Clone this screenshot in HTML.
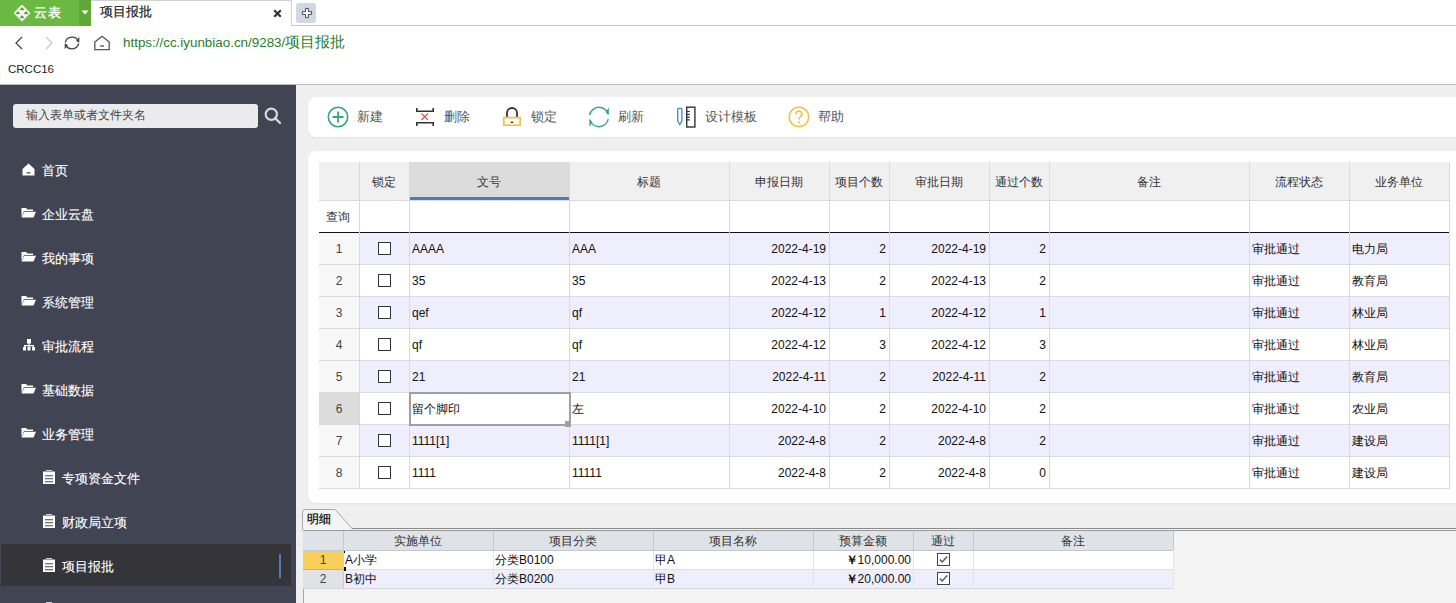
<!DOCTYPE html><html><head><meta charset="utf-8"><style>
*{box-sizing:border-box;margin:0;padding:0}
html,body{width:1456px;height:603px;overflow:hidden;background:#fff;font-family:"Liberation Sans",sans-serif;color:#222}
div,span,svg{position:absolute}
.t{white-space:nowrap;line-height:16px}
</style></head><body>
<div style="left:0px;top:0px;width:91px;height:26px;background:#6bb843"></div>
<div style="left:79px;top:0px;width:12px;height:26px;background:#5ea838"></div>
<svg style="left:81px;top:10px;" width="8" height="5" viewBox="0 0 8 5"><path d="M0.5 0.5 L7.5 0.5 L4 4.5 Z" fill="#fff"/></svg>
<svg style="left:13px;top:4px;" width="18" height="18" viewBox="0 0 18 18"><path d="M9 1.6 L16.4 9 L9 16.4 L1.6 9 Z" fill="#f0fae8" stroke="#f0fae8" stroke-width="1.6" stroke-linejoin="round"/><path d="M7.4 6 L9 4.4 L10.6 6" stroke="#5e8a3c" stroke-width="1.5" fill="none"/><path d="M3.3 10 L4.9 8.4 L6.5 10" stroke="#5e8a3c" stroke-width="1.5" fill="none"/><path d="M11.5 10 L13.1 8.4 L14.7 10" stroke="#5e8a3c" stroke-width="1.5" fill="none"/><path d="M7.4 14 L9 12.4 L10.6 14" stroke="#5e8a3c" stroke-width="1.5" fill="none"/></svg>
<div class="t" style="left:34px;top:5px;font-size:13px;color:#fff;-webkit-text-stroke:0.4px #fff;letter-spacing:1.3px">云表</div>
<div style="left:91px;top:0px;width:201px;height:26px;background:#fff;border-top:1px solid #d2d2d2;border-right:1px solid #d2d2d2"></div>
<div style="left:291px;top:25px;width:1165px;height:1px;background:#c9c9c9"></div>
<div class="t" style="left:100px;top:4px;font-size:13px;color:#222;-webkit-text-stroke:0.2px #222">项目报批</div>
<svg style="left:273px;top:9px;" width="9" height="9" viewBox="0 0 9 9"><path d="M1.2 1.2 L7.8 7.8 M7.8 1.2 L1.2 7.8" stroke="#333" stroke-width="2.2"/></svg>
<div style="left:296px;top:3px;width:20px;height:20px;background:#d0d9e2;border-radius:3px"></div>
<svg style="left:301px;top:7px;" width="12" height="12" viewBox="0 0 12 12"><path d="M4.6 1.4 H7.4 V4.6 H10.6 V7.4 H7.4 V10.6 H4.6 V7.4 H1.4 V4.6 H4.6 Z" fill="#fff" stroke="#4a4a4a" stroke-width="1"/></svg>
<svg style="left:14px;top:36px;" width="10" height="14" viewBox="0 0 10 14"><path d="M8 1 L2 7 L8 13" stroke="#444" stroke-width="1.2" fill="none"/></svg>
<svg style="left:44px;top:36px;" width="10" height="14" viewBox="0 0 10 14"><path d="M2 1 L8 7 L2 13" stroke="#c8c8c8" stroke-width="1.2" fill="none"/></svg>
<svg style="left:63px;top:34px;" width="18" height="18" viewBox="0 0 18 18"><path d="M15.6 8 A6.9 6.9 0 0 0 2.3 8.6" stroke="#444" stroke-width="1.3" fill="none"/><path d="M2.4 10 A6.9 6.9 0 0 0 15.7 9.4" stroke="#444" stroke-width="1.3" fill="none"/><path d="M16.3 2.8 L16.3 8.6 L13 7 Z" fill="#444"/><path d="M1.7 15.2 L1.7 9.4 L5 11 Z" fill="#444"/></svg>
<svg style="left:93px;top:35px;" width="18" height="17" viewBox="0 0 18 17"><path d="M1.8 14.7 V6.9 L9 1.3 L16.2 6.9 V14.7 Z" stroke="#555" stroke-width="1.3" fill="none" stroke-linejoin="round"/><path d="M7 11 H11" stroke="#555" stroke-width="1.3"/></svg>
<div class="t" style="left:123px;top:33px;font-size:13.4px;color:#2a7e2a;line-height:18px">https://cc.iyunbiao.cn/9283/<span style="position:static;font-size:15px">项目报批</span></div>
<div class="t" style="left:8px;top:61px;font-size:11.5px;color:#222;">CRCC16</div>
<div style="left:0px;top:84px;width:1456px;height:1px;background:#bdbdbd"></div>
<div style="left:0px;top:85px;width:296px;height:518px;background:#414452"></div>
<div style="left:13px;top:104px;width:245px;height:24px;background:#ebebed;border-radius:3px"></div>
<div class="t" style="left:26px;top:107px;font-size:12px;color:#444;">输入表单或者文件夹名</div>
<svg style="left:263px;top:106px;" width="20" height="20" viewBox="0 0 20 20"><circle cx="8.3" cy="8.3" r="5.6" stroke="#d8d8dc" stroke-width="2.2" fill="none"/><path d="M12 12 L17 17" stroke="#d8d8dc" stroke-width="2.4" stroke-linecap="round"/></svg>
<div style="left:1px;top:544px;width:290px;height:42px;background:#343439"></div>
<div style="left:279px;top:554px;width:2px;height:24px;background:#5079b8"></div>
<svg style="left:22px;top:163px;" width="13" height="13" viewBox="0 0 13 13"><path d="M0.5 6 L6.5 0.5 L12.5 6 V12.5 H0.5 Z" fill="#fff"/><path d="M4.5 9.8 H8.5" stroke="#414452" stroke-width="1.2"/></svg>
<div class="t" style="left:42px;top:163px;font-size:13px;color:#fff;-webkit-text-stroke:0.12px #fff">首页</div>
<svg style="left:21px;top:207px;" width="16" height="11" viewBox="0 0 16 11"><path d="M0.5 1 H5 L6.5 2.5 H12 V4 H3 L0.5 10 Z" fill="#fff"/><path d="M3.2 4.8 H15 L12.5 10.5 H0.5 Z" fill="#fff"/></svg>
<div class="t" style="left:42px;top:207px;font-size:13px;color:#fff;-webkit-text-stroke:0.12px #fff">企业云盘</div>
<svg style="left:21px;top:251px;" width="16" height="11" viewBox="0 0 16 11"><path d="M0.5 1 H5 L6.5 2.5 H12 V4 H3 L0.5 10 Z" fill="#fff"/><path d="M3.2 4.8 H15 L12.5 10.5 H0.5 Z" fill="#fff"/></svg>
<div class="t" style="left:42px;top:251px;font-size:13px;color:#fff;-webkit-text-stroke:0.12px #fff">我的事项</div>
<svg style="left:21px;top:295px;" width="16" height="11" viewBox="0 0 16 11"><path d="M0.5 1 H5 L6.5 2.5 H12 V4 H3 L0.5 10 Z" fill="#fff"/><path d="M3.2 4.8 H15 L12.5 10.5 H0.5 Z" fill="#fff"/></svg>
<div class="t" style="left:42px;top:295px;font-size:13px;color:#fff;-webkit-text-stroke:0.12px #fff">系统管理</div>
<svg style="left:23px;top:339px;" width="12" height="12" viewBox="0 0 12 12"><rect x="4" y="0" width="4" height="4.5" fill="#fff"/><rect x="5.4" y="4" width="1.2" height="2.5" fill="#fff"/><rect x="1" y="6" width="10" height="1.3" fill="#fff"/><rect x="1" y="6" width="1.3" height="2" fill="#fff"/><rect x="5.4" y="6" width="1.2" height="2" fill="#fff"/><rect x="9.7" y="6" width="1.3" height="2" fill="#fff"/><rect x="0" y="8" width="3" height="3.5" fill="#fff"/><rect x="4.5" y="8" width="3" height="3.5" fill="#fff"/><rect x="9" y="8" width="3" height="3.5" fill="#fff"/></svg>
<div class="t" style="left:42px;top:339px;font-size:13px;color:#fff;-webkit-text-stroke:0.12px #fff">审批流程</div>
<svg style="left:21px;top:383px;" width="16" height="11" viewBox="0 0 16 11"><path d="M0.5 1 H5 L6.5 2.5 H12 V4 H3 L0.5 10 Z" fill="#fff"/><path d="M3.2 4.8 H15 L12.5 10.5 H0.5 Z" fill="#fff"/></svg>
<div class="t" style="left:42px;top:383px;font-size:13px;color:#fff;-webkit-text-stroke:0.12px #fff">基础数据</div>
<svg style="left:21px;top:427px;" width="16" height="11" viewBox="0 0 16 11"><path d="M0.5 1 H5 L6.5 2.5 H12 V4 H3 L0.5 10 Z" fill="#fff"/><path d="M3.2 4.8 H15 L12.5 10.5 H0.5 Z" fill="#fff"/></svg>
<div class="t" style="left:42px;top:427px;font-size:13px;color:#fff;-webkit-text-stroke:0.12px #fff">业务管理</div>
<svg style="left:43px;top:470px;" width="12" height="14" viewBox="0 0 12 14"><path d="M0 1.6 H3 V0.3 H9 V1.6 H12 V14 H0 Z" fill="#fff"/><path d="M3 1.6 H9" stroke="#414452" stroke-width="0.6"/><path d="M2 5.7 H10 M2 8.7 H10 M2 11.7 H10" stroke="#414452" stroke-width="1.1"/></svg>
<div class="t" style="left:62px;top:471px;font-size:13px;color:#fff;-webkit-text-stroke:0.12px #fff">专项资金文件</div>
<svg style="left:43px;top:514px;" width="12" height="14" viewBox="0 0 12 14"><path d="M0 1.6 H3 V0.3 H9 V1.6 H12 V14 H0 Z" fill="#fff"/><path d="M3 1.6 H9" stroke="#414452" stroke-width="0.6"/><path d="M2 5.7 H10 M2 8.7 H10 M2 11.7 H10" stroke="#414452" stroke-width="1.1"/></svg>
<div class="t" style="left:62px;top:515px;font-size:13px;color:#fff;-webkit-text-stroke:0.12px #fff">财政局立项</div>
<svg style="left:43px;top:558px;" width="12" height="14" viewBox="0 0 12 14"><path d="M0 1.6 H3 V0.3 H9 V1.6 H12 V14 H0 Z" fill="#fff"/><path d="M3 1.6 H9" stroke="#414452" stroke-width="0.6"/><path d="M2 5.7 H10 M2 8.7 H10 M2 11.7 H10" stroke="#414452" stroke-width="1.1"/></svg>
<div class="t" style="left:62px;top:559px;font-size:13px;color:#fff;-webkit-text-stroke:0.12px #fff">项目报批</div>
<svg style="left:43px;top:602px;" width="12" height="14" viewBox="0 0 12 14"><path d="M0 1.6 H3 V0.3 H9 V1.6 H12 V14 H0 Z" fill="#fff"/><path d="M3 1.6 H9" stroke="#414452" stroke-width="0.6"/><path d="M2 5.7 H10 M2 8.7 H10 M2 11.7 H10" stroke="#414452" stroke-width="1.1"/></svg>
<div style="left:296px;top:85px;width:1160px;height:518px;background:#efefef"></div>
<div style="left:308px;top:97px;width:1160px;height:40px;background:#fff;border-radius:8px;box-shadow:0 1px 2px rgba(0,0,0,0.05)"></div>
<div style="left:308px;top:151px;width:1160px;height:352px;background:#fff;border-radius:8px;box-shadow:0 1px 2px rgba(0,0,0,0.05)"></div>
<svg style="left:327px;top:106px;" width="22" height="22" viewBox="0 0 22 22"><circle cx="11" cy="11" r="9.7" stroke="#35a57a" stroke-width="1.6" fill="none"/><path d="M11 5.5 V16.5 M5.5 11 H16.5" stroke="#35a57a" stroke-width="1.8"/></svg>
<svg style="left:415px;top:107px;" width="20" height="20" viewBox="0 0 20 20"><path d="M1.8 1 V4.3 H18.2 V1" stroke="#333" stroke-width="1.6" fill="none"/><path d="M1.8 19 V15.7 H18.2 V19" stroke="#333" stroke-width="1.6" fill="none"/><path d="M6.5 6.5 L13 13 M13 6.5 L6.5 13" stroke="#e05555" stroke-width="1.3"/></svg>
<svg style="left:502px;top:107px;" width="20" height="20" viewBox="0 0 20 20"><path d="M5 10.5 V6 A5 5 0 0 1 15 6 V10.5" stroke="#333" stroke-width="1.8" fill="none"/><rect x="1.8" y="10.6" width="16.4" height="7.6" stroke="#f0c34a" stroke-width="1.8" fill="none"/><path d="M8.7 15.3 H11.3" stroke="#333" stroke-width="1.4"/></svg>
<svg style="left:588px;top:106px;" width="22" height="22" viewBox="0 0 22 22"><path d="M1.6 9 A9.6 9.6 0 0 1 20.2 8.2" stroke="#3aa87c" stroke-width="1.5" fill="none"/><path d="M20.8 1.2 L20.8 8.8 L17.6 6.2 Z" fill="#3aa87c"/><path d="M20.3 13.2 A9.6 9.6 0 0 1 1.7 13.6" stroke="#3aa87c" stroke-width="1.5" fill="none"/><path d="M1.4 21 L1.4 13.4 L4.6 15.9 Z" fill="#3aa87c"/></svg>
<svg style="left:676px;top:106px;" width="21" height="22" viewBox="0 0 21 22"><path d="M1.7 3.2 Q1.7 2.4 2.5 2.4 H5.1 Q5.9 2.4 5.9 3.2 V15 L3.8 18.6 L1.7 15 Z" stroke="#3d88cc" stroke-width="1.3" fill="none" stroke-linejoin="round"/><rect x="10.7" y="1.2" width="8.2" height="19.8" stroke="#333" stroke-width="1.4" fill="none"/><path d="M10.7 5.5 H13.8 M10.7 8.3 H13.8 M10.7 11.1 H13.8 M10.7 13.9 H13.8" stroke="#333" stroke-width="1.2"/></svg>
<svg style="left:788px;top:106px;" width="22" height="22" viewBox="0 0 22 22"><circle cx="11" cy="11" r="9.8" stroke="#f0c34a" stroke-width="1.6" fill="none"/><path d="M8 8.2 A3 3 0 1 1 12.3 10.8 C11.2 11.5 11 12 11 13.8" stroke="#f0c34a" stroke-width="1.6" fill="none"/><circle cx="11" cy="16.3" r="1" fill="#f0c34a"/></svg>
<div class="t" style="left:357px;top:109px;font-size:13px;color:#555;">新建</div>
<div class="t" style="left:444px;top:109px;font-size:13px;color:#555;">删除</div>
<div class="t" style="left:531px;top:109px;font-size:13px;color:#555;">锁定</div>
<div class="t" style="left:618px;top:109px;font-size:13px;color:#555;">刷新</div>
<div class="t" style="left:705px;top:109px;font-size:13px;color:#555;">设计模板</div>
<div class="t" style="left:818px;top:109px;font-size:13px;color:#555;">帮助</div>
<div style="left:319px;top:162px;width:1130px;height:38px;background:#f0f0f0"></div>
<div style="left:409px;top:162px;width:160px;height:38px;background:#dcdcdc"></div>
<div style="left:410px;top:197px;width:159px;height:3px;background:#4a7bc4"></div>
<div style="left:319px;top:200px;width:1130px;height:1px;background:#dadada"></div>
<div class="t" style="left:326px;top:209px;font-size:12px;color:#333;">查询</div>
<div style="left:319px;top:232px;width:1130px;height:2px;background:#111"></div>
<div style="left:359px;top:233px;width:1090px;height:31px;background:#eeeefc"></div>
<div style="left:319px;top:233px;width:40px;height:31px;background:#f8f8f8"></div>
<div style="left:319px;top:264px;width:1130px;height:1px;background:#dadada"></div>
<div style="left:319px;top:265px;width:40px;height:31px;background:#f8f8f8"></div>
<div style="left:319px;top:296px;width:1130px;height:1px;background:#dadada"></div>
<div style="left:359px;top:297px;width:1090px;height:31px;background:#eeeefc"></div>
<div style="left:319px;top:297px;width:40px;height:31px;background:#f8f8f8"></div>
<div style="left:319px;top:328px;width:1130px;height:1px;background:#dadada"></div>
<div style="left:319px;top:329px;width:40px;height:31px;background:#f8f8f8"></div>
<div style="left:319px;top:360px;width:1130px;height:1px;background:#dadada"></div>
<div style="left:359px;top:361px;width:1090px;height:31px;background:#eeeefc"></div>
<div style="left:319px;top:361px;width:40px;height:31px;background:#f8f8f8"></div>
<div style="left:319px;top:392px;width:1130px;height:1px;background:#dadada"></div>
<div style="left:319px;top:393px;width:40px;height:31px;background:#dcdcdc"></div>
<div style="left:319px;top:424px;width:1130px;height:1px;background:#dadada"></div>
<div style="left:359px;top:425px;width:1090px;height:31px;background:#eeeefc"></div>
<div style="left:319px;top:425px;width:40px;height:31px;background:#f8f8f8"></div>
<div style="left:319px;top:456px;width:1130px;height:1px;background:#dadada"></div>
<div style="left:319px;top:457px;width:40px;height:31px;background:#f8f8f8"></div>
<div style="left:319px;top:488px;width:1130px;height:1px;background:#dadada"></div>
<div style="left:359px;top:162px;width:1px;height:327px;background:#dadada"></div>
<div style="left:409px;top:162px;width:1px;height:327px;background:#dadada"></div>
<div style="left:569px;top:162px;width:1px;height:327px;background:#dadada"></div>
<div style="left:729px;top:162px;width:1px;height:327px;background:#dadada"></div>
<div style="left:829px;top:162px;width:1px;height:327px;background:#dadada"></div>
<div style="left:889px;top:162px;width:1px;height:327px;background:#dadada"></div>
<div style="left:989px;top:162px;width:1px;height:327px;background:#dadada"></div>
<div style="left:1049px;top:162px;width:1px;height:327px;background:#dadada"></div>
<div style="left:1249px;top:162px;width:1px;height:327px;background:#dadada"></div>
<div style="left:1349px;top:162px;width:1px;height:327px;background:#dadada"></div>
<div style="left:1449px;top:162px;width:1px;height:327px;background:#dadada"></div>
<div class="t" style="left:319px;top:241px;width:40px;text-align:center;font-size:12px;color:#444;">1</div>
<div style="left:378px;top:242px;width:13px;height:13px;border:1px solid #333;background:#fff"></div>
<div class="t" style="left:412px;top:241px;font-size:12px;color:#111;">AAAA</div>
<div class="t" style="left:572px;top:241px;font-size:12px;color:#111;">AAA</div>
<div class="t" style="left:729px;top:241px;width:97px;text-align:right;font-size:12px;color:#111;">2022-4-19</div>
<div class="t" style="left:829px;top:241px;width:57px;text-align:right;font-size:12px;color:#111;">2</div>
<div class="t" style="left:889px;top:241px;width:97px;text-align:right;font-size:12px;color:#111;">2022-4-19</div>
<div class="t" style="left:989px;top:241px;width:57px;text-align:right;font-size:12px;color:#111;">2</div>
<div class="t" style="left:1252px;top:241px;font-size:12px;color:#111;">审批通过</div>
<div class="t" style="left:1352px;top:241px;font-size:12px;color:#111;">电力局</div>
<div class="t" style="left:319px;top:273px;width:40px;text-align:center;font-size:12px;color:#444;">2</div>
<div style="left:378px;top:274px;width:13px;height:13px;border:1px solid #333;background:#fff"></div>
<div class="t" style="left:412px;top:273px;font-size:12px;color:#111;">35</div>
<div class="t" style="left:572px;top:273px;font-size:12px;color:#111;">35</div>
<div class="t" style="left:729px;top:273px;width:97px;text-align:right;font-size:12px;color:#111;">2022-4-13</div>
<div class="t" style="left:829px;top:273px;width:57px;text-align:right;font-size:12px;color:#111;">2</div>
<div class="t" style="left:889px;top:273px;width:97px;text-align:right;font-size:12px;color:#111;">2022-4-13</div>
<div class="t" style="left:989px;top:273px;width:57px;text-align:right;font-size:12px;color:#111;">2</div>
<div class="t" style="left:1252px;top:273px;font-size:12px;color:#111;">审批通过</div>
<div class="t" style="left:1352px;top:273px;font-size:12px;color:#111;">教育局</div>
<div class="t" style="left:319px;top:305px;width:40px;text-align:center;font-size:12px;color:#444;">3</div>
<div style="left:378px;top:306px;width:13px;height:13px;border:1px solid #333;background:#fff"></div>
<div class="t" style="left:412px;top:305px;font-size:12px;color:#111;">qef</div>
<div class="t" style="left:572px;top:305px;font-size:12px;color:#111;">qf</div>
<div class="t" style="left:729px;top:305px;width:97px;text-align:right;font-size:12px;color:#111;">2022-4-12</div>
<div class="t" style="left:829px;top:305px;width:57px;text-align:right;font-size:12px;color:#111;">1</div>
<div class="t" style="left:889px;top:305px;width:97px;text-align:right;font-size:12px;color:#111;">2022-4-12</div>
<div class="t" style="left:989px;top:305px;width:57px;text-align:right;font-size:12px;color:#111;">1</div>
<div class="t" style="left:1252px;top:305px;font-size:12px;color:#111;">审批通过</div>
<div class="t" style="left:1352px;top:305px;font-size:12px;color:#111;">林业局</div>
<div class="t" style="left:319px;top:337px;width:40px;text-align:center;font-size:12px;color:#444;">4</div>
<div style="left:378px;top:338px;width:13px;height:13px;border:1px solid #333;background:#fff"></div>
<div class="t" style="left:412px;top:337px;font-size:12px;color:#111;">qf</div>
<div class="t" style="left:572px;top:337px;font-size:12px;color:#111;">qf</div>
<div class="t" style="left:729px;top:337px;width:97px;text-align:right;font-size:12px;color:#111;">2022-4-12</div>
<div class="t" style="left:829px;top:337px;width:57px;text-align:right;font-size:12px;color:#111;">3</div>
<div class="t" style="left:889px;top:337px;width:97px;text-align:right;font-size:12px;color:#111;">2022-4-12</div>
<div class="t" style="left:989px;top:337px;width:57px;text-align:right;font-size:12px;color:#111;">3</div>
<div class="t" style="left:1252px;top:337px;font-size:12px;color:#111;">审批通过</div>
<div class="t" style="left:1352px;top:337px;font-size:12px;color:#111;">林业局</div>
<div class="t" style="left:319px;top:369px;width:40px;text-align:center;font-size:12px;color:#444;">5</div>
<div style="left:378px;top:370px;width:13px;height:13px;border:1px solid #333;background:#fff"></div>
<div class="t" style="left:412px;top:369px;font-size:12px;color:#111;">21</div>
<div class="t" style="left:572px;top:369px;font-size:12px;color:#111;">21</div>
<div class="t" style="left:729px;top:369px;width:97px;text-align:right;font-size:12px;color:#111;">2022-4-11</div>
<div class="t" style="left:829px;top:369px;width:57px;text-align:right;font-size:12px;color:#111;">2</div>
<div class="t" style="left:889px;top:369px;width:97px;text-align:right;font-size:12px;color:#111;">2022-4-11</div>
<div class="t" style="left:989px;top:369px;width:57px;text-align:right;font-size:12px;color:#111;">2</div>
<div class="t" style="left:1252px;top:369px;font-size:12px;color:#111;">审批通过</div>
<div class="t" style="left:1352px;top:369px;font-size:12px;color:#111;">教育局</div>
<div class="t" style="left:319px;top:401px;width:40px;text-align:center;font-size:12px;color:#444;">6</div>
<div style="left:378px;top:402px;width:13px;height:13px;border:1px solid #333;background:#fff"></div>
<div class="t" style="left:412px;top:401px;font-size:12px;color:#111;">留个脚印</div>
<div class="t" style="left:572px;top:401px;font-size:12px;color:#111;">左</div>
<div class="t" style="left:729px;top:401px;width:97px;text-align:right;font-size:12px;color:#111;">2022-4-10</div>
<div class="t" style="left:829px;top:401px;width:57px;text-align:right;font-size:12px;color:#111;">2</div>
<div class="t" style="left:889px;top:401px;width:97px;text-align:right;font-size:12px;color:#111;">2022-4-10</div>
<div class="t" style="left:989px;top:401px;width:57px;text-align:right;font-size:12px;color:#111;">2</div>
<div class="t" style="left:1252px;top:401px;font-size:12px;color:#111;">审批通过</div>
<div class="t" style="left:1352px;top:401px;font-size:12px;color:#111;">农业局</div>
<div class="t" style="left:319px;top:433px;width:40px;text-align:center;font-size:12px;color:#444;">7</div>
<div style="left:378px;top:434px;width:13px;height:13px;border:1px solid #333;background:#fff"></div>
<div class="t" style="left:412px;top:433px;font-size:12px;color:#111;">1111[1]</div>
<div class="t" style="left:572px;top:433px;font-size:12px;color:#111;">1111[1]</div>
<div class="t" style="left:729px;top:433px;width:97px;text-align:right;font-size:12px;color:#111;">2022-4-8</div>
<div class="t" style="left:829px;top:433px;width:57px;text-align:right;font-size:12px;color:#111;">2</div>
<div class="t" style="left:889px;top:433px;width:97px;text-align:right;font-size:12px;color:#111;">2022-4-8</div>
<div class="t" style="left:989px;top:433px;width:57px;text-align:right;font-size:12px;color:#111;">2</div>
<div class="t" style="left:1252px;top:433px;font-size:12px;color:#111;">审批通过</div>
<div class="t" style="left:1352px;top:433px;font-size:12px;color:#111;">建设局</div>
<div class="t" style="left:319px;top:465px;width:40px;text-align:center;font-size:12px;color:#444;">8</div>
<div style="left:378px;top:466px;width:13px;height:13px;border:1px solid #333;background:#fff"></div>
<div class="t" style="left:412px;top:465px;font-size:12px;color:#111;">1111</div>
<div class="t" style="left:572px;top:465px;font-size:12px;color:#111;">11111</div>
<div class="t" style="left:729px;top:465px;width:97px;text-align:right;font-size:12px;color:#111;">2022-4-8</div>
<div class="t" style="left:829px;top:465px;width:57px;text-align:right;font-size:12px;color:#111;">2</div>
<div class="t" style="left:889px;top:465px;width:97px;text-align:right;font-size:12px;color:#111;">2022-4-8</div>
<div class="t" style="left:989px;top:465px;width:57px;text-align:right;font-size:12px;color:#111;">0</div>
<div class="t" style="left:1252px;top:465px;font-size:12px;color:#111;">审批通过</div>
<div class="t" style="left:1352px;top:465px;font-size:12px;color:#111;">建设局</div>
<div class="t" style="left:359px;top:174px;width:50px;text-align:center;font-size:12px;color:#333;">锁定</div>
<div class="t" style="left:409px;top:174px;width:160px;text-align:center;font-size:12px;color:#333;">文号</div>
<div class="t" style="left:569px;top:174px;width:160px;text-align:center;font-size:12px;color:#333;">标题</div>
<div class="t" style="left:729px;top:174px;width:100px;text-align:center;font-size:12px;color:#333;">申报日期</div>
<div class="t" style="left:829px;top:174px;width:60px;text-align:center;font-size:12px;color:#333;">项目个数</div>
<div class="t" style="left:889px;top:174px;width:100px;text-align:center;font-size:12px;color:#333;">审批日期</div>
<div class="t" style="left:989px;top:174px;width:60px;text-align:center;font-size:12px;color:#333;">通过个数</div>
<div class="t" style="left:1049px;top:174px;width:200px;text-align:center;font-size:12px;color:#333;">备注</div>
<div class="t" style="left:1249px;top:174px;width:100px;text-align:center;font-size:12px;color:#333;">流程状态</div>
<div class="t" style="left:1349px;top:174px;width:100px;text-align:center;font-size:12px;color:#333;">业务单位</div>
<div style="left:409px;top:392px;width:162px;height:34px;border:2px solid #a0a0a0"></div>
<div style="left:565px;top:421px;width:6px;height:6px;background:#a0a0a0"></div>
<div style="left:303px;top:529px;width:1153px;height:74px;background:#f3f3f3"></div>
<div style="left:303px;top:528px;width:1153px;height:1px;background:#8a8a8a"></div>
<div style="left:303px;top:530px;width:1153px;height:1px;background:#9a9a9a"></div>
<div style="left:303px;top:528px;width:1px;height:75px;background:#a8a8a8"></div>
<svg style="left:302px;top:509px;" width="52" height="21" viewBox="0 0 52 21"><path d="M0.5 21 V3.5 Q0.5 0.5 3.5 0.5 H33 L51 20.5" fill="#f4f4f4" stroke="#a8a8a8" stroke-width="1"/></svg>
<div class="t" style="left:307px;top:511px;font-size:12px;color:#111;-webkit-text-stroke:0.3px #111">明细</div>
<div style="left:303px;top:531px;width:870px;height:19px;background:#dfe3e8"></div>
<div style="left:303px;top:551px;width:40px;height:18px;background:#f8cf5a"></div>
<div style="left:343px;top:551px;width:830px;height:18px;background:#fff"></div>
<div style="left:303px;top:570px;width:40px;height:18px;background:#dfe3e8"></div>
<div style="left:343px;top:570px;width:830px;height:18px;background:#eeeefc"></div>
<div style="left:303px;top:550px;width:870px;height:1px;background:#c4c8cc"></div>
<div style="left:303px;top:569px;width:40px;height:1px;background:#d9b24a"></div>
<div style="left:343px;top:569px;width:830px;height:1px;background:#dde0e4"></div>
<div style="left:303px;top:588px;width:870px;height:1px;background:#d4d8dc"></div>
<div style="left:343px;top:531px;width:1px;height:19px;background:#c4c8cc"></div>
<div style="left:343px;top:551px;width:1px;height:38px;background:#c8ccd0"></div>
<div style="left:493px;top:531px;width:1px;height:19px;background:#c4c8cc"></div>
<div style="left:493px;top:551px;width:1px;height:38px;background:#e2e4e8"></div>
<div style="left:653px;top:531px;width:1px;height:19px;background:#c4c8cc"></div>
<div style="left:653px;top:551px;width:1px;height:38px;background:#e2e4e8"></div>
<div style="left:813px;top:531px;width:1px;height:19px;background:#c4c8cc"></div>
<div style="left:813px;top:551px;width:1px;height:38px;background:#e2e4e8"></div>
<div style="left:913px;top:531px;width:1px;height:19px;background:#c4c8cc"></div>
<div style="left:913px;top:551px;width:1px;height:38px;background:#e2e4e8"></div>
<div style="left:973px;top:531px;width:1px;height:19px;background:#c4c8cc"></div>
<div style="left:973px;top:551px;width:1px;height:38px;background:#e2e4e8"></div>
<div style="left:1173px;top:531px;width:1px;height:19px;background:#c4c8cc"></div>
<div style="left:1173px;top:551px;width:1px;height:38px;background:#e2e4e8"></div>
<div class="t" style="left:343px;top:533px;width:150px;text-align:center;font-size:12px;color:#333;">实施单位</div>
<div class="t" style="left:493px;top:533px;width:160px;text-align:center;font-size:12px;color:#333;">项目分类</div>
<div class="t" style="left:653px;top:533px;width:160px;text-align:center;font-size:12px;color:#333;">项目名称</div>
<div class="t" style="left:813px;top:533px;width:100px;text-align:center;font-size:12px;color:#333;">预算金额</div>
<div class="t" style="left:913px;top:533px;width:60px;text-align:center;font-size:12px;color:#333;">通过</div>
<div class="t" style="left:973px;top:533px;width:200px;text-align:center;font-size:12px;color:#333;">备注</div>
<div class="t" style="left:303px;top:552px;width:40px;text-align:center;font-size:12px;color:#444;">1</div>
<div class="t" style="left:345px;top:552px;font-size:12px;color:#111;">A小学</div>
<div class="t" style="left:495px;top:552px;font-size:12px;color:#111;">分类B0100</div>
<div class="t" style="left:655px;top:552px;font-size:12px;color:#111;">甲A</div>
<div class="t" style="left:813px;top:552px;width:98px;text-align:right;font-size:12px;color:#111;"><b style="position:static">￥</b>10,000.00</div>
<svg style="left:937px;top:553px;" width="13" height="13" viewBox="0 0 13 13"><rect x="0.5" y="0.5" width="12" height="12" fill="#fff" stroke="#444"/><path d="M2.8 6.5 L5.2 9 L10.2 3.5" stroke="#555" stroke-width="1.4" fill="none"/></svg>
<div class="t" style="left:303px;top:571px;width:40px;text-align:center;font-size:12px;color:#444;">2</div>
<div class="t" style="left:345px;top:571px;font-size:12px;color:#111;">B初中</div>
<div class="t" style="left:495px;top:571px;font-size:12px;color:#111;">分类B0200</div>
<div class="t" style="left:655px;top:571px;font-size:12px;color:#111;">甲B</div>
<div class="t" style="left:813px;top:571px;width:98px;text-align:right;font-size:12px;color:#111;"><b style="position:static">￥</b>20,000.00</div>
<svg style="left:937px;top:572px;" width="13" height="13" viewBox="0 0 13 13"><rect x="0.5" y="0.5" width="12" height="12" fill="#fff" stroke="#444"/><path d="M2.8 6.5 L5.2 9 L10.2 3.5" stroke="#555" stroke-width="1.4" fill="none"/></svg>
<div style="left:344px;top:551px;width:1px;height:2px;background:#000"></div>
<div style="left:344px;top:567px;width:2px;height:4px;background:#000"></div>
</body></html>
